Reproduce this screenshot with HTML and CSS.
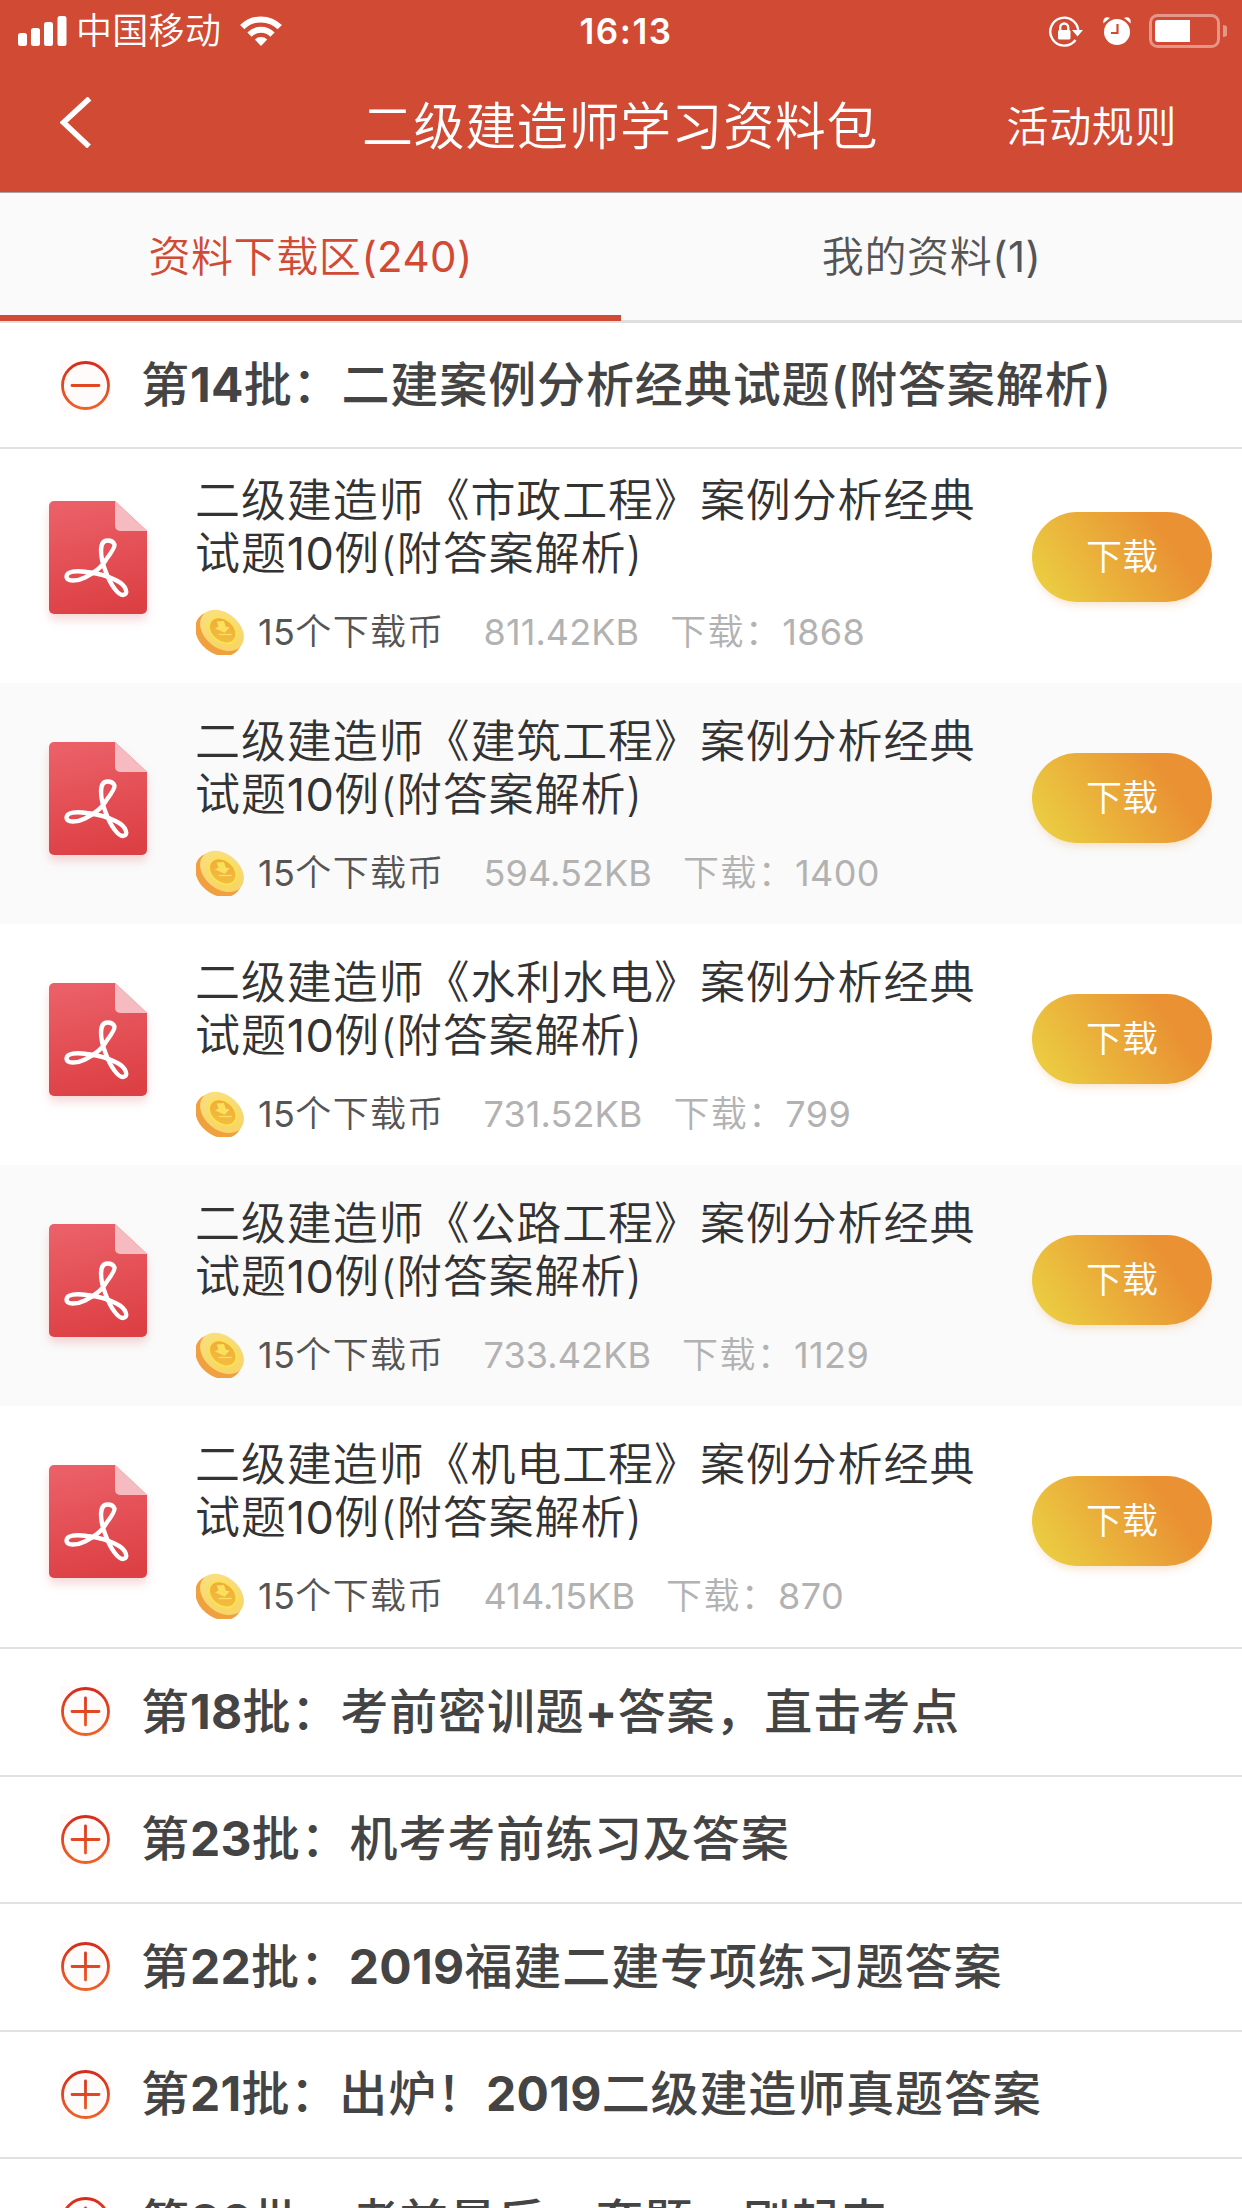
FILE: index.html
```html
<!DOCTYPE html>
<html lang="zh-CN">
<head>
<meta charset="utf-8">
<title>二级建造师学习资料包</title>
<link rel="stylesheet" href="styles.css">
</head>
<body>
<svg class="defs" width="0" height="0" aria-hidden="true">
  <defs>
    <linearGradient id="ring" x1="0" y1="0" x2="0" y2="50" gradientUnits="userSpaceOnUse">
      <stop offset="0" stop-color="#d42a1c"/><stop offset="1" stop-color="#ee6428"/>
    </linearGradient>
    <linearGradient id="sheet" x1="0.3" y1="0" x2="0.5" y2="1">
      <stop offset="0" stop-color="#eb6068"/><stop offset="1" stop-color="#dc4044"/>
    </linearGradient>
    <linearGradient id="coinFace" x1="0" y1="0" x2="1" y2="0.6">
      <stop offset="0" stop-color="#fae183"/><stop offset="1" stop-color="#f7d565"/>
    </linearGradient>
    <linearGradient id="coinHole" x1="0" y1="0" x2="0.8" y2="1">
      <stop offset="0" stop-color="#efa93c"/><stop offset="1" stop-color="#f3bd40"/>
    </linearGradient>
    <symbol id="plus" viewBox="0 0 51 51">
      <rect width="51" height="51" fill="#fffbfb"/>
      <g fill="none" stroke="url(#ring)" stroke-width="2.8">
        <circle cx="25.5" cy="25.5" r="23"/>
        <path d="M12 25.5L39 25.51M25.5 12L25.51 39" stroke-linecap="round"/>
      </g>
    </symbol>
    <symbol id="minus" viewBox="0 0 51 51">
      <rect width="51" height="51" fill="#fffbfb"/>
      <g fill="none" stroke="url(#ring)" stroke-width="2.8">
        <circle cx="25.5" cy="25.5" r="23"/>
        <path d="M12 25.5L39 25.51" stroke-linecap="round"/>
      </g>
    </symbol>
    <symbol id="pdf" viewBox="0 0 98 113">
      <path d="M5 0H66L98 30V108a5 5 0 0 1-5 5H5a5 5 0 0 1-5-5V5a5 5 0 0 1 5-5z" fill="url(#sheet)"/>
      <path d="M66 0L98 30H71a5 5 0 0 1-5-5z" fill="#f5bbc0"/>
      <path d="M58.500 39.500C49.500 39.500 51 56 56.500 70C61.500 84 69 94 74 94C80 93.500 77.500 84.500 67.500 79.500C59 75 47 72 38 71C27 69.500 18 70 17.500 75.500C17.500 81 28 80.500 36 76.500C47 71 54 65 57.500 58C62 52 66 46 65.500 43.500C64.500 41 61.500 39.500 58.500 39.500Z" fill="none" stroke="#fff" stroke-width="4.400" stroke-linejoin="round"/>
    </symbol>
    <symbol id="coin" viewBox="0 0 48 46">
      <g transform="rotate(40 24 23)">
        <ellipse cx="24" cy="25.500" rx="25.500" ry="19.500" fill="#f1a03f"/>
        <ellipse cx="24.500" cy="20.500" rx="24.500" ry="17.500" fill="url(#coinFace)"/>
        <ellipse cx="25" cy="20" rx="16" ry="12" fill="#fbe54a"/>
        <ellipse cx="25" cy="20" rx="14.200" ry="10.300" fill="url(#coinHole)"/>
      </g>
      <path d="M20.500 12.500L28 12L29.800 17.800L33.700 18.300L28.700 23.700L19 19.500L22.600 17.500Z" fill="#fbe05c"/>
      <path d="M22.700 25.500h13" stroke="#fbe05c" stroke-width="1.300"/>
    </symbol>
  </defs>
</svg>

<header class="top">
  <div class="status">
    <div class="status-left">
      <svg class="signal" viewBox="0 0 49 30" fill="#fff">
        <rect x="0" y="17" width="9" height="13" rx="2.500"/><rect x="13" y="12" width="9" height="18" rx="2.500"/>
        <rect x="26" y="6" width="9" height="24" rx="2.500"/><rect x="39.500" y="0" width="9" height="30" rx="2.500"/>
      </svg>
      <span class="carrier">中国移动</span>
      <svg class="wifi" viewBox="0 0 42 30" fill="none" stroke="#fff" stroke-width="6">
        <path d="M2.200 11.200a26.500 26.500 0 0 1 37.600 0"/>
        <path d="M9.500 18.600a16.300 16.300 0 0 1 23 0"/>
        <path d="M21 30L14.800 23.600a9 9 0 0 1 12.400 0z" fill="#fff" stroke="none"/>
      </svg>
    </div>
    <span class="clock">16:13</span>
    <div class="status-right">
      <svg class="lock" viewBox="0 0 34 31" fill="none" stroke="#fff" stroke-width="2.400">
        <path d="M29.200 17A14 14 0 1 0 26.500 24"/>
        <path d="M23 14h11l-5.500 6.500z" fill="#fff" stroke="none"/>
        <rect x="9" y="14" width="12.500" height="9.500" rx="1.500" fill="#fff" stroke="none"/>
        <path d="M11.200 15v-3.500a4 4 0 0 1 8 0V15"/>
      </svg>
      <svg class="alarm" viewBox="0 0 28 28">
        <circle cx="14" cy="15" r="13" fill="#fff"/>
        <path d="M.5 6Q0 3 2 1Q4 0 6.500 1ZM27.500 6Q28 3 26 1Q24 0 21.500 1Z" fill="#fff" stroke="#fff" stroke-width=".5"/>
        <path d="M14.500 7v9H8" fill="none" stroke="#d04a34" stroke-width="2.200"/>
      </svg>
      <svg class="battery" viewBox="0 0 78 34">
        <rect x="1.500" y="1.500" width="68" height="31" rx="7" fill="none" stroke="#fff" stroke-opacity=".42" stroke-width="3"/>
        <path d="M74 11a6 6 0 0 1 0 12z" fill="#fff" fill-opacity=".42"/>
        <path d="M9 6H41V28H9a3 3 0 0 1-3-3V9a3 3 0 0 1 3-3z" fill="#fff"/>
      </svg>
    </div>
  </div>
  <div class="nav">
    <svg class="back" viewBox="0 0 32 51"><path d="M29.500 1.500L3.500 25.500L29 49.500" fill="none" stroke="#fff" stroke-width="5.500"/></svg>
    <h1 class="title">二级建造师学习资料包</h1>
    <span class="rules">活动规则</span>
  </div>
</header>

<nav class="tabs">
  <div class="tab tab-active">资料下载区<span class="num">(240)</span></div>
  <div class="tab">我的资料<span class="num">(1)</span></div>
</nav>

<section>
  <h2 class="group group-open"><svg class="toggle"><use href="#minus"/></svg><span class="label">第<b>14</b>批：二建案例分析经典试题(附答案解析)</span></h2>
  <ul class="files">
    <li class="file">
      <svg class="pdf"><use href="#pdf"/></svg>
      <div class="info">
        <p class="name">二级建造师《市政工程》案例分析经典<br>试题<span class="num">10</span>例(附答案解析)</p>
        <p class="meta"><svg class="coin"><use href="#coin"/></svg><span class="price"><span class="num">15</span>个下载币</span><span class="size">811.42KB</span><span>下载：<span class="num">1868</span></span></p>
      </div>
      <button class="get">下载</button>
    </li>
    <li class="file">
      <svg class="pdf"><use href="#pdf"/></svg>
      <div class="info">
        <p class="name">二级建造师《建筑工程》案例分析经典<br>试题<span class="num">10</span>例(附答案解析)</p>
        <p class="meta"><svg class="coin"><use href="#coin"/></svg><span class="price"><span class="num">15</span>个下载币</span><span class="size">594.52KB</span><span>下载：<span class="num">1400</span></span></p>
      </div>
      <button class="get">下载</button>
    </li>
    <li class="file">
      <svg class="pdf"><use href="#pdf"/></svg>
      <div class="info">
        <p class="name">二级建造师《水利水电》案例分析经典<br>试题<span class="num">10</span>例(附答案解析)</p>
        <p class="meta"><svg class="coin"><use href="#coin"/></svg><span class="price"><span class="num">15</span>个下载币</span><span class="size">731.52KB</span><span>下载：<span class="num">799</span></span></p>
      </div>
      <button class="get">下载</button>
    </li>
    <li class="file">
      <svg class="pdf"><use href="#pdf"/></svg>
      <div class="info">
        <p class="name">二级建造师《公路工程》案例分析经典<br>试题<span class="num">10</span>例(附答案解析)</p>
        <p class="meta"><svg class="coin"><use href="#coin"/></svg><span class="price"><span class="num">15</span>个下载币</span><span class="size">733.42KB</span><span>下载：<span class="num">1129</span></span></p>
      </div>
      <button class="get">下载</button>
    </li>
    <li class="file">
      <svg class="pdf"><use href="#pdf"/></svg>
      <div class="info">
        <p class="name">二级建造师《机电工程》案例分析经典<br>试题<span class="num">10</span>例(附答案解析)</p>
        <p class="meta"><svg class="coin"><use href="#coin"/></svg><span class="price"><span class="num">15</span>个下载币</span><span class="size">414.15KB</span><span>下载：<span class="num">870</span></span></p>
      </div>
      <button class="get">下载</button>
    </li>
  </ul>
</section>

<section class="closed">
  <h2 class="group"><svg class="toggle"><use href="#plus"/></svg><span class="label">第<b>18</b>批：考前密训题<b>+</b>答案，直击考点</span></h2>
  <h2 class="group"><svg class="toggle"><use href="#plus"/></svg><span class="label">第<b>23</b>批：机考考前练习及答案</span></h2>
  <h2 class="group"><svg class="toggle"><use href="#plus"/></svg><span class="label">第<b>22</b>批：<b>2019</b>福建二建专项练习题答案</span></h2>
  <h2 class="group"><svg class="toggle"><use href="#plus"/></svg><span class="label">第<b>21</b>批：出炉！<b>2019</b>二级建造师真题答案</span></h2>
  <h2 class="group"><svg class="toggle"><use href="#plus"/></svg><span class="label">第<b>20</b>批：考前最后一套题，刷起来</span></h2>
</section>
</body>
</html>
```
FILE: styles.css
```css
* { box-sizing: border-box; margin: 0; padding: 0; }
html { height: 2208px; overflow: hidden; }
body {
  width: 1242px;
  height: 2208px;
  overflow: hidden;
  background: #fff;
  color: #333;
  font-family: Inter, "Noto Sans CJK SC", sans-serif;
  font-weight: 350;
}
svg { display: block; flex: none; }
.defs { position: absolute; }
.num { font-weight: 400; letter-spacing: 0.4px; }

.top { height: 193px; background: #d04a34; color: #fff; border-bottom: 1px solid #a9a4a2; }
.status {
  height: 60px;
  display: grid;
  grid-template-columns: 1fr auto 1fr;
  align-items: center;
  padding: 0 15px 0 18px;
}
.status-left, .status-right { display: flex; align-items: center; }
.status-right { justify-content: flex-end; }
.signal { width: 49px; height: 30px; }
.carrier { margin-left: 9px; font-size: 36px; line-height: 61px; letter-spacing: 0.3px; }
.wifi { width: 42px; height: 30px; margin-left: 19px; }
.clock { margin-left: 7px; font-size: 35px; font-weight: 600; line-height: 62px; letter-spacing: 1.5px; }
.lock { width: 34px; height: 31px; }
.alarm { width: 28px; height: 28px; margin-left: 20px; }
.battery { width: 78px; height: 34px; margin-left: 18px; }
.nav {
  height: 132px;
  display: grid;
  grid-template-columns: 1fr auto 1fr;
  align-items: center;
  padding: 0 65px 0 60px;
}
.back { width: 32px; height: 51px; margin-bottom: 10px; }
.title { margin-left: 3px; font-size: 51px; font-weight: 350; letter-spacing: 0.6px; line-height: 134px; }
.rules { justify-self: end; font-size: 42px; letter-spacing: 0.6px; line-height: 130px; }

.tabs { display: flex; height: 130px; background: #fafafa; border-bottom: 3px solid #dfdfdf; }
.tab {
  flex: 1;
  height: 128px;
  text-align: center;
  font-size: 42px;
  line-height: 127px;
  letter-spacing: 0.6px;
  color: #555;
}
.tab-active { color: #d04a34; border-bottom: 6px solid #d04a34; }

.group {
  display: flex;
  align-items: center;
  height: 127.5px;
  padding-left: 60px;
  border-bottom: 2px solid #e1e1e1;
  font-size: 48px;
  font-weight: 500;
  letter-spacing: 0.9px;
  color: #444;
  white-space: nowrap;
}
.group-open { height: 126px; }
.group b { font-weight: 700; letter-spacing: 0.3px; }
.label { line-height: 124px; }
.toggle { width: 51px; height: 51px; margin-right: 30px; }
.closed { border-top: 2px solid #e1e1e1; }

.files { list-style: none; }
.file { display: flex; height: 241px; padding: 31px 30px 0 49px; }
.file:first-child { height: 234px; padding-top: 24px; }
.file:nth-child(even) { background: #fafafa; }
.pdf {
  width: 98px;
  height: 113px;
  margin: 28px 48px 0 0;
  filter: drop-shadow(0 6px 5px rgba(220, 64, 68, 0.2));
}
.info { flex: 1; padding-top: 1px; }
.name { font-size: 45px; line-height: 53px; letter-spacing: 0.9px; color: #333; white-space: nowrap; }
.meta {
  display: flex;
  align-items: center;
  height: 50px;
  margin-top: 27px;
  font-size: 36px;
  line-height: 50px;
  letter-spacing: 1.3px;
  color: #b2b2b2;
  white-space: nowrap;
}
.coin { width: 48px; height: 46px; margin: 0 14px 0 1px; }
.price { color: #555; margin-right: 39px; }
.size { margin-right: 31px; font-weight: 400; letter-spacing: 0.1px; }
.get {
  flex: none;
  width: 180px;
  height: 90px;
  margin-top: 39px;
  border: 0;
  border-radius: 45px;
  background: linear-gradient(55deg, #ebcb41 10%, #e99133 75%);
  box-shadow: 0 6px 8px -3px rgba(233, 145, 51, 0.25);
  color: #fff;
  font: inherit;
  font-size: 36px;
  line-height: 91px;
}
```
